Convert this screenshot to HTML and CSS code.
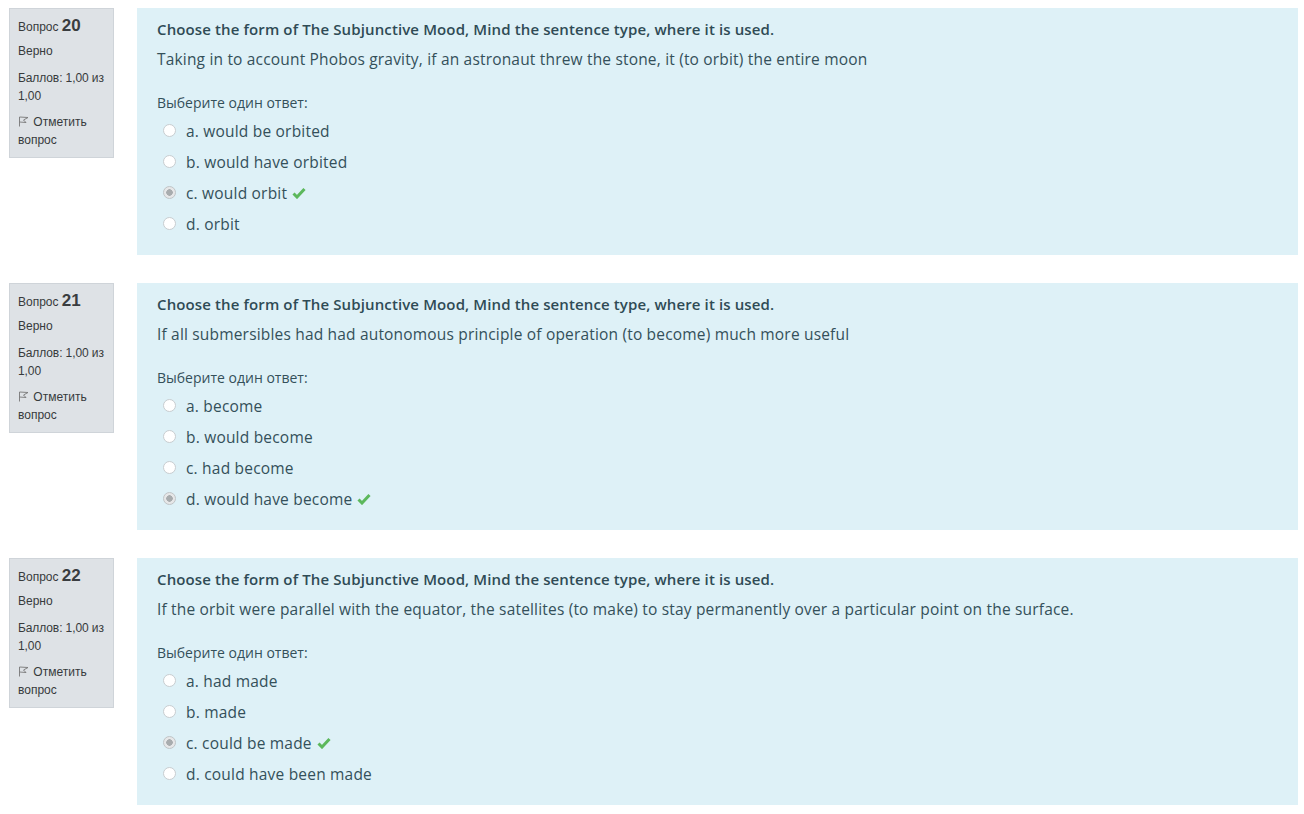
FILE: index.html
```html
<!DOCTYPE html>
<html lang="ru">
<head>
<meta charset="utf-8">
<title>Тест</title>
<link rel="stylesheet" href="styles.css">
</head>
<body>
<div class="page">

  <div class="que">
    <div class="info">
      <div class="no">Вопрос <span class="qno">20</span></div>
      <div class="state">Верно</div>
      <div class="grade">Баллов: 1,00 из 1,00</div>
      <div class="flag"><svg class="flagicon" width="11" height="11" viewBox="0 0 11 11"><path d="M1.5 10.5 L1.5 1 L10 1.5 L5.5 4 L8 6.5 L1.5 6" fill="none" stroke="#777" stroke-width="0.9"/></svg> Отметить вопрос</div>
    </div>
    <div class="content">
      <div class="qtext">
        <p class="title">Choose the form of The Subjunctive Mood, Mind the sentence type, where it is used.</p>
        <p class="sentence">Taking in to account Phobos gravity, if an astronaut threw the stone, it (to orbit) the entire moon</p>
      </div>
      <div class="prompt">Выберите один ответ:</div>
      <div class="answers">
        <div class="opt"><span class="radio"></span><span class="label">a. would be orbited</span></div>
        <div class="opt"><span class="radio"></span><span class="label">b. would have orbited</span></div>
        <div class="opt"><span class="radio checked"></span><span class="label">c. would orbit</span><svg class="check" width="14" height="12" viewBox="0 0 14 12"><path d="M1.5 6.5 L5 10 L12.5 2" fill="none" stroke="#5cb85c" stroke-width="3"/></svg></div>
        <div class="opt"><span class="radio"></span><span class="label">d. orbit</span></div>
      </div>
    </div>
  </div>

  <div class="que">
    <div class="info">
      <div class="no">Вопрос <span class="qno">21</span></div>
      <div class="state">Верно</div>
      <div class="grade">Баллов: 1,00 из 1,00</div>
      <div class="flag"><svg class="flagicon" width="11" height="11" viewBox="0 0 11 11"><path d="M1.5 10.5 L1.5 1 L10 1.5 L5.5 4 L8 6.5 L1.5 6" fill="none" stroke="#777" stroke-width="0.9"/></svg> Отметить вопрос</div>
    </div>
    <div class="content">
      <div class="qtext">
        <p class="title">Choose the form of The Subjunctive Mood, Mind the sentence type, where it is used.</p>
        <p class="sentence">If all submersibles had had autonomous principle of operation (to become) much more useful</p>
      </div>
      <div class="prompt">Выберите один ответ:</div>
      <div class="answers">
        <div class="opt"><span class="radio"></span><span class="label">a. become</span></div>
        <div class="opt"><span class="radio"></span><span class="label">b. would become</span></div>
        <div class="opt"><span class="radio"></span><span class="label">c. had become</span></div>
        <div class="opt"><span class="radio checked"></span><span class="label">d. would have become</span><svg class="check" width="14" height="12" viewBox="0 0 14 12"><path d="M1.5 6.5 L5 10 L12.5 2" fill="none" stroke="#5cb85c" stroke-width="3"/></svg></div>
      </div>
    </div>
  </div>

  <div class="que">
    <div class="info">
      <div class="no">Вопрос <span class="qno">22</span></div>
      <div class="state">Верно</div>
      <div class="grade">Баллов: 1,00 из 1,00</div>
      <div class="flag"><svg class="flagicon" width="11" height="11" viewBox="0 0 11 11"><path d="M1.5 10.5 L1.5 1 L10 1.5 L5.5 4 L8 6.5 L1.5 6" fill="none" stroke="#777" stroke-width="0.9"/></svg> Отметить вопрос</div>
    </div>
    <div class="content">
      <div class="qtext">
        <p class="title">Choose the form of The Subjunctive Mood, Mind the sentence type, where it is used.</p>
        <p class="sentence">If the orbit were parallel with the equator, the satellites (to make) to stay permanently over a particular point on the surface.</p>
      </div>
      <div class="prompt">Выберите один ответ:</div>
      <div class="answers">
        <div class="opt"><span class="radio"></span><span class="label">a. had made</span></div>
        <div class="opt"><span class="radio"></span><span class="label">b. made</span></div>
        <div class="opt"><span class="radio checked"></span><span class="label">c. could be made</span><svg class="check" width="14" height="12" viewBox="0 0 14 12"><path d="M1.5 6.5 L5 10 L12.5 2" fill="none" stroke="#5cb85c" stroke-width="3"/></svg></div>
        <div class="opt"><span class="radio"></span><span class="label">d. could have been made</span></div>
      </div>
    </div>
  </div>

</div>
</body>
</html>
```

FILE: styles.css
```css
* { box-sizing: border-box; }
html, body { margin: 0; padding: 0; background: #fff; }
body { font-family: "Open Sans", "Liberation Sans", sans-serif; color: #34505a; }

.page {
  padding: 8px 6px 0 9px;
  display: flex;
  flex-direction: column;
  gap: 28px;
}

.que {
  display: flex;
  align-items: flex-start;
  gap: 23px;
}

.info {
  flex: 0 0 105px;
  background: #dee2e6;
  border: 1px solid #cfd4d9;
  padding: 7px 3px 8px 8px;
  font-family: "Liberation Sans", Arial, sans-serif;
  font-size: 12px;
  line-height: 18px;
  color: #373a3c;
}
.info .no { line-height: 20px; margin-bottom: 5px; }
.info .qno { font-size: 17px; font-weight: bold; color: #3a3d40; }
.info .state { margin-bottom: 9px; }
.info .grade { margin-bottom: 8px; letter-spacing: -0.1px; }
.flagicon { vertical-align: -1px; margin-right: 1px; }

.content {
  flex: 1;
  height: 247px;
  background: #def1f7;
  padding: 10px 20px 0 20px;
}

.qtext p { margin: 0; }
.title {
  font-weight: 600;
  font-size: 15px;
  line-height: 22px;
  letter-spacing: 0.12px;
  color: #2f4b55;
  margin-bottom: 8px !important;
}
.sentence {
  font-size: 15.5px;
  line-height: 22px;
  letter-spacing: 0.18px;
}
.prompt {
  margin-top: 22px;
  font-size: 14px;
  line-height: 22px;
}
.answers { margin-top: 1px; }
.opt {
  display: flex;
  align-items: center;
  height: 31px;
  padding-left: 6px;
  font-size: 15.5px;
  letter-spacing: 0.2px;
}
.radio {
  width: 13px;
  height: 13px;
  border-radius: 50%;
  border: 1px solid #c8cdd0;
  background: #fff;
  margin-right: 10px;
  flex: none;
}
.radio.checked {
  background: radial-gradient(circle, #a8acae 0 3px, #e6e7e8 3.5px);
  border-color: #c0c4c6;
}
.check { margin-left: 5px; }
```
